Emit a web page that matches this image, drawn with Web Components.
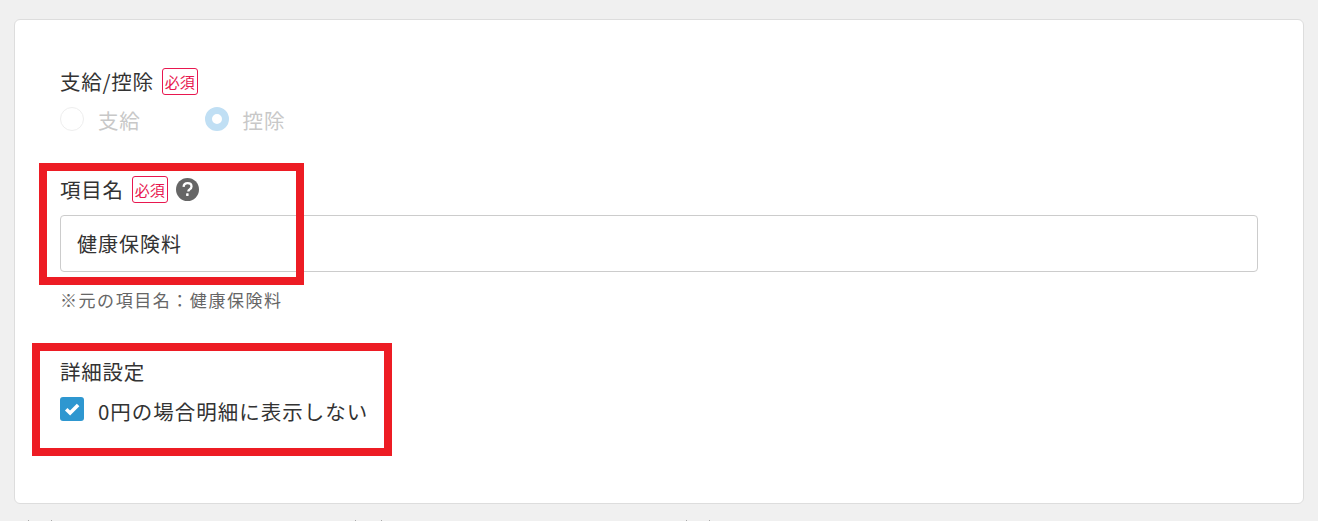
<!DOCTYPE html>
<html lang="ja"><head><meta charset="utf-8">
<style>
html,body{margin:0;height:521px;overflow:hidden;background:#f0f0f0}
body{font-family:"Noto Sans CJK JP","Noto Sans",sans-serif;color:#333;position:relative}
</style></head><body>
<template id="t-card"><style>
:host{display:block;box-sizing:border-box;margin:19px 14px 0;width:1290px;height:485px;background:#fff;border:1px solid #ddd;border-radius:6px;padding:48px 45px 0}
</style><slot></slot></template>

<template id="t-field"><style>
:host{display:block}
.l{display:flex;align-items:center;gap:8px;height:27px;font-size:20.500px;letter-spacing:.75px;line-height:27px;color:#333}
</style><div class="l"><slot name="label"></slot></div><slot></slot></template>

<template id="t-badge"><style>
:host{display:inline-flex;align-items:center;justify-content:center;box-sizing:border-box;width:36px;height:27px;border:1px solid #e8174f;border-radius:3px;color:#e8174f;font-size:15px;letter-spacing:0;line-height:1;background:#fff}
</style><slot></slot></template>

<template id="t-help"><style>
:host{display:inline-flex;width:23px;height:23px}
svg{display:block}
</style><svg width="23" height="23" viewBox="0 0 23 23"><circle cx="11.5" cy="11.5" r="11.5" fill="#666"/><path d="M7.6 8.9c.1-2.4 1.7-3.700 4-3.700 2.200 0 3.900 1.200 3.900 3.200 0 1.500-.8 2.300-1.900 3-1 .6-1.300 1-1.300 2.100" fill="none" stroke="#fff" stroke-width="2.300"/><rect x="10.100" y="15.300" width="2.500" height="2.600" rx=".4" fill="#fff"/></svg></template>

<template id="t-radio"><style>
:host{display:inline-flex;align-items:center;gap:14px;font-size:20.500px;letter-spacing:.8px;color:#c8c8c8;line-height:28px}
i{box-sizing:border-box;width:24px;height:24px;border-radius:50%;border:1px solid #eee;background:#fff;flex:none;position:relative;top:-1px}
:host([checked]) i{border:7.500px solid #c0dff4}
</style><i></i><span><slot></slot></span></template>

<template id="t-input"><style>
:host{display:block;box-sizing:border-box;width:1198px;height:57px;border:1px solid #ccc;border-radius:4px;padding:0 16px;font-size:20px;letter-spacing:1px;line-height:55px;color:#333;background:#fff}
</style><slot></slot></template>

<template id="t-check"><style>
:host{display:flex;align-items:center;gap:14px;font-size:20.500px;letter-spacing:.98px;color:#333;line-height:28px}
svg{display:block;flex:none;position:relative;top:-2px}
</style><svg width="24" height="24" viewBox="0 0 24 24"><rect width="24" height="24" rx="3" fill="#2e97d0"/><path d="M6.200 12.300l3.900 3.700 8-8" fill="none" stroke="#fff" stroke-width="3.600"/></svg><span><slot></slot></span></template>

<template id="t-note"><style>
:host{display:block;font-size:17px;letter-spacing:1.550px;line-height:24px;color:#666}
</style><slot></slot></template>

<template id="t-mark"><style>
:host{display:block;position:absolute;box-sizing:border-box;border:8px solid #ed1c24;pointer-events:none}
</style></template>

<template id="t-ticks"><style>
:host{display:flex;position:absolute;left:0;right:0;top:520px;height:1px}
b{display:block;width:1px;height:1px;background:#aaa}
</style><b style="margin-left:28px"></b><b style="margin-left:22px"></b><b style="margin-left:303px"></b><b style="margin-left:25px"></b><b style="margin-left:304px"></b><b style="margin-left:22px"></b></template>

<x-card>
  <x-field>
    <span slot="label">支給/控除</span><x-badge slot="label">必須</x-badge>
    <div style="display:flex;gap:64px;margin-top:11px"><x-radio>支給</x-radio><x-radio checked>控除</x-radio></div>
  </x-field>
  <x-field style="margin-top:42px">
    <span slot="label">項目名</span><x-badge slot="label">必須</x-badge><x-help slot="label"></x-help>
    <x-input style="margin-top:12px">健康保険料</x-input>
    <x-note style="margin-top:16px">※元の項目名：健康保険料</x-note>
  </x-field>
  <x-field style="margin-top:46px">
    <span slot="label">詳細設定</span>
    <x-check style="margin-top:12px">0円の場合明細に表示しない</x-check>
  </x-field>
</x-card>
<x-ticks></x-ticks>
<x-mark style="left:39px;top:163px;width:265px;height:122px"></x-mark>
<x-mark style="left:32px;top:343px;width:360px;height:113px"></x-mark>
<script>
for (const n of ['card','field','badge','help','radio','input','check','note','mark','ticks']) {
  customElements.define('x-'+n, class extends HTMLElement {
    constructor(){super();this.attachShadow({mode:'open'}).appendChild(document.getElementById('t-'+n).content.cloneNode(true));}
  });
}
</script>
</body></html>
